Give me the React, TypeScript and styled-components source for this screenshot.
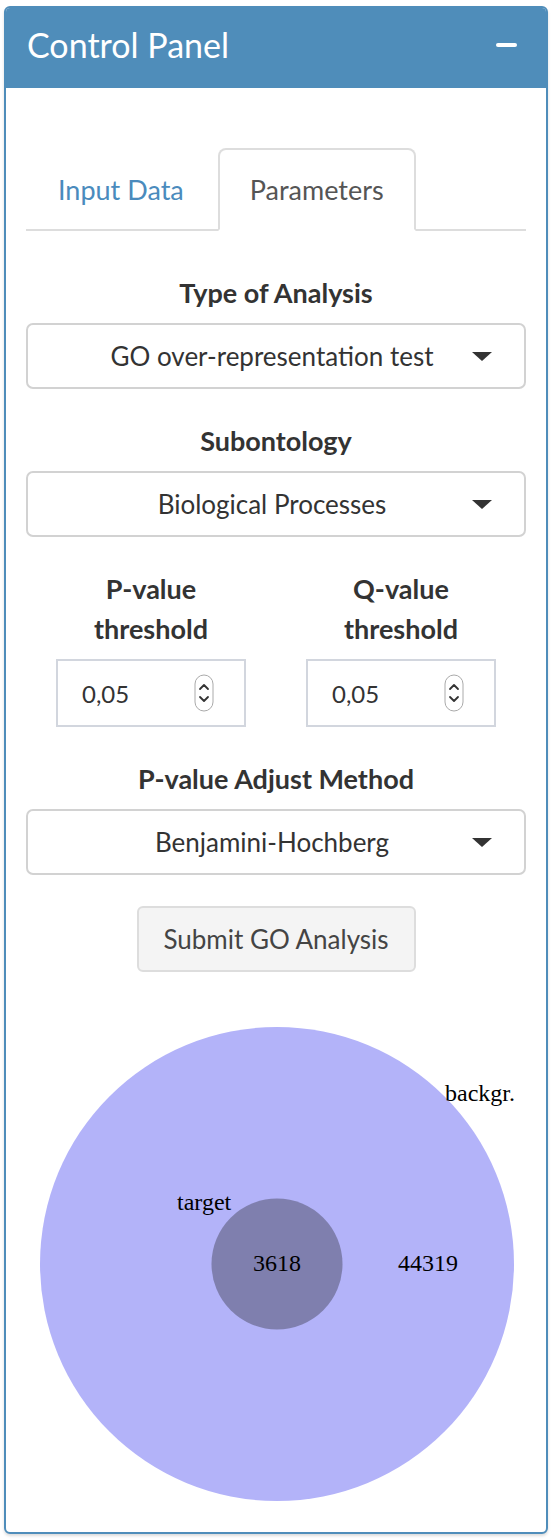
import React from "react";
import styled, { createGlobalStyle } from "styled-components";

const Global = createGlobalStyle`
  html, body { margin: 0; padding: 0; background: #fff; }
  body { font-family: Lato, "Liberation Sans", sans-serif; color: #333; }
  * { box-sizing: border-box; }
`;

const Page = styled.div`
  width: 560px;
  height: 1540px;
  padding: 6px 0 0 4px;
`;

const Box = styled.section`
  width: 544px;
  border: 2px solid #4f8dba;
  border-radius: 6px;
  background: #fff;
  box-shadow: 0 2px 3px rgba(0, 0, 0, 0.14);
  overflow: hidden;
`;

const Header = styled.header`
  height: 80px;
  background: #4f8dba;
  display: flex;
  align-items: center;
  justify-content: space-between;
  padding: 0 29px 0 21px;
`;

const Title = styled.h3`
  margin: 0;
  color: #fff;
  font-size: 34px;
  font-weight: 400;
  line-height: 1;
  margin-top: -6px;
`;

const Minus = styled.span`
  width: 21px;
  height: 4px;
  border-radius: 2px;
  background: #fff;
  margin-top: -6px;
`;

const Body = styled.div`
  padding: 60px 20px 22px 20px;
  display: flex;
  flex-direction: column;
`;

const Tabs = styled.nav`
  display: flex;
  border-bottom: 2px solid #ddd;
`;

const Tab = styled.div<{ $active?: boolean }>`
  height: 83px;
  margin-bottom: -2px;
  margin-right: 2px;
  padding: 0 30px;
  display: flex;
  align-items: center;
  font-size: 27px;
  border: 2px solid ${(p) => (p.$active ? "#ddd" : "transparent")};
  border-bottom-color: transparent;
  border-radius: 8px 8px 0 0;
  background: ${(p) => (p.$active ? "#fff" : "transparent")};
  color: ${(p) => (p.$active ? "#555" : "#4a8bbd")};
`;

const Form = styled.div`
  display: flex;
  flex-direction: column;
  gap: 32px;
  padding-top: 42px;
`;

const Group = styled.div`
  display: flex;
  flex-direction: column;
  align-items: center;
  gap: 10px;
`;

const Label = styled.label`
  font-weight: 700;
  font-size: 27px;
  line-height: 40px;
  text-align: center;
  color: #333;
`;

const SelectBox = styled.div`
  width: 100%;
  height: 66px;
  border: 2px solid #d2d2d2;
  border-radius: 7px;
  display: flex;
  align-items: center;
  padding: 0 32px 0 44px;
  font-size: 26px;
  color: #333;
`;

const SelectText = styled.span`
  flex: 1;
  text-align: center;
`;

const Caret = styled.span`
  width: 0;
  height: 0;
  border-left: 10px solid transparent;
  border-right: 10px solid transparent;
  border-top: 9px solid #333;
`;

const Row = styled.div`
  display: grid;
  grid-template-columns: 1fr 1fr;
`;

const NumberBox = styled.div`
  width: 190px;
  height: 68px;
  border: 2px solid #d2d6de;
  display: flex;
  align-items: center;
  justify-content: space-between;
  padding: 0 30px 0 24px;
  font-size: 24px;
  color: #333;
`;

const Button = styled.button`
  align-self: center;
  width: 279px;
  height: 66px;
  margin-top: -1px;
  background: #f4f4f4;
  border: 2px solid #ddd;
  border-radius: 6px;
  font-family: inherit;
  font-size: 26px;
  color: #444;
`;

const Venn = styled.svg`
  display: block;
  margin-top: 48px;
`;

const Spinner = () => (
  <svg width="20" height="38" viewBox="0 0 20 38">
    <rect x="1" y="1" width="18" height="36" rx="9" fill="#fff" stroke="#aaa" strokeWidth="1" />
    <polyline points="6,15 10,11 14,15" fill="none" stroke="#333" strokeWidth="1.8" strokeLinecap="round" strokeLinejoin="round" />
    <polyline points="6,23 10,27 14,23" fill="none" stroke="#333" strokeWidth="1.8" strokeLinecap="round" strokeLinejoin="round" />
  </svg>
);

const Select = ({ value }: { value: string }) => (
  <SelectBox>
    <SelectText>{value}</SelectText>
    <Caret />
  </SelectBox>
);

export default function App() {
  return (
    <>
      <Global />
      <Page>
        <Box>
          <Header>
            <Title>Control Panel</Title>
            <Minus />
          </Header>
          <Body>
            <Tabs>
              <Tab>Input Data</Tab>
              <Tab $active>Parameters</Tab>
            </Tabs>
            <Form>
              <Group>
                <Label>Type of Analysis</Label>
                <Select value="GO over-representation test" />
              </Group>
              <Group>
                <Label>Subontology</Label>
                <Select value="Biological Processes" />
              </Group>
              <Row>
                <Group>
                  <Label>
                    P-value
                    <br />
                    threshold
                  </Label>
                  <NumberBox>
                    <span>0,05</span>
                    <Spinner />
                  </NumberBox>
                </Group>
                <Group>
                  <Label>
                    Q-value
                    <br />
                    threshold
                  </Label>
                  <NumberBox>
                    <span>0,05</span>
                    <Spinner />
                  </NumberBox>
                </Group>
              </Row>
              <Group>
                <Label>P-value Adjust Method</Label>
                <Select value="Benjamini-Hochberg" />
              </Group>
              <Button>Submit GO Analysis</Button>
            </Form>
            <Venn width="500" height="490" viewBox="0 0 500 490">
              <circle cx="251" cy="244" r="237" fill="#b3b3f9" />
              <circle cx="251" cy="244" r="65.5" fill="#7f7fae" />
              <g fontFamily="'Liberation Serif', serif" fontSize="24" fill="#000">
                <text x="419" y="81">backgr.</text>
                <text x="151" y="190">target</text>
                <text x="251" y="251" textAnchor="middle">3618</text>
                <text x="402" y="251" textAnchor="middle">44319</text>
              </g>
            </Venn>
          </Body>
        </Box>
      </Page>
    </>
  );
}
